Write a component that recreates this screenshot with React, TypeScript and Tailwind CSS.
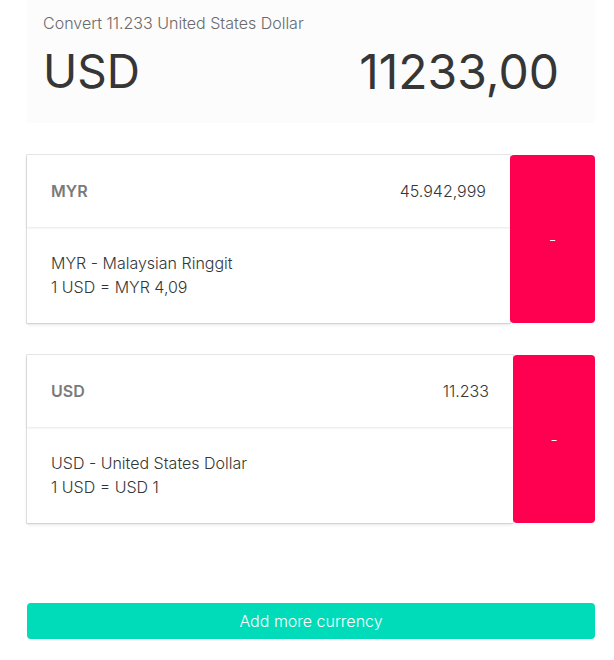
type Row = { code: string; amount: string; name: string; rate: string; button: string };

const rows: Row[] = [
  { code: "MYR", amount: "45.942,999", name: "Malaysian Ringgit", rate: "MYR 4,09", button: "w-[85px]" },
  { code: "USD", amount: "11.233", name: "United States Dollar", rate: "USD 1", button: "w-[82px]" },
];

function CurrencyCard({ row }: { row: Row }) {
  return (
    <li className="flex">
      <article className="min-w-0 flex-1 bg-white shadow-[0_2px_3px_rgba(10,10,10,0.1),0_0_0_1px_rgba(10,10,10,0.1)]">
        <header className="flex justify-between p-6 text-[#363636] shadow-[0_1px_2px_rgba(10,10,10,0.1)]">
          <strong className="font-semibold text-[#7a7a7a]">{row.code}</strong>
          <span>{row.amount}</span>
        </header>
        <div className="p-6 text-[#363636]">
          <p>{row.code} - {row.name}</p>
          <p>1 USD = {row.rate}</p>
        </div>
      </article>
      <button type="button" aria-label={`Remove ${row.code}`} className={`relative rounded bg-[#ff0050] text-white ${row.button}`}>
        -
      </button>
    </li>
  );
}

export default function App() {
  return (
    <main className="min-h-screen bg-white pr-[19px] pb-5 pl-[27px] font-['Inter','Liberation_Sans',sans-serif] text-base leading-6 font-light">
      <section className="bg-[#fcfcfc] px-4 pt-[11px] pb-5">
        <label htmlFor="amount" className="block text-[#6a6a6a]">Convert 11.233 United States Dollar</label>
        <div className="flex items-center justify-between pt-1 font-normal text-[#363636]">
          <span className="text-[46px]">USD</span>
          <input id="amount" type="text" defaultValue="11233,00" className="h-16 min-w-0 flex-1 bg-transparent pr-5 text-right text-5xl outline-none" />
        </div>
      </section>
      <ul className="mt-8 flex flex-col gap-8">
        {rows.map((row) => <CurrencyCard key={row.code} row={row} />)}
      </ul>
      <button type="button" className="mt-20 h-9 w-full rounded bg-[#00dbb9] text-white">Add more currency</button>
    </main>
  );
}
